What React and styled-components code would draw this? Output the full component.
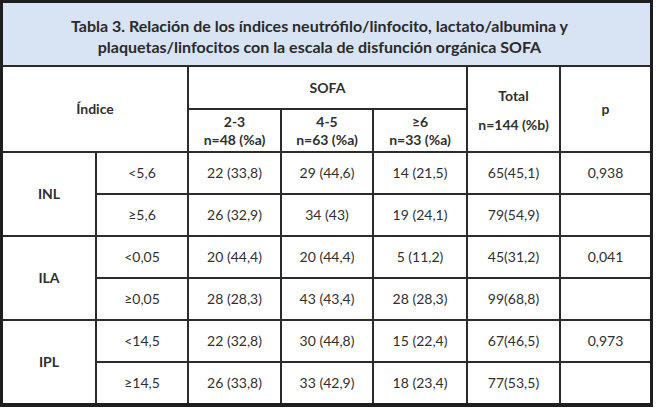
import styled, { createGlobalStyle } from 'styled-components';

const Global = createGlobalStyle`
  html, body {
    margin: 0;
    padding: 0;
    background: #ffffff;
  }
  body {
    font-family: Lato, "Open Sans", sans-serif;
    color: #2f2f2f;
  }
`;

const Frame = styled.div`
  width: 653px;
  box-sizing: border-box;
  border: 3px solid #1e1e1e;
  border-bottom-width: 4px;
  background: #2b2b2b;
`;

const Title = styled.div`
  height: 64px;
  box-sizing: border-box;
  padding: 3px 14px 0 0;
  background: #d8e4f4;
  border-bottom: 2px solid #2b2b2b;
  display: flex;
  flex-direction: column;
  align-items: center;
  justify-content: center;
  font-weight: 700;
  font-size: 16px;
  line-height: 21px;
  color: #2a2a2a;
  text-align: center;
`;

const Grid = styled.div`
  display: grid;
  grid-template-columns: 92px 90px 91px 90px 92px 91px 89px;
  grid-template-rows: 41px 41px repeat(6, 40px);
  gap: 2px;
`;

const Cell = styled.div`
  background: #ffffff;
  display: flex;
  flex-direction: column;
  align-items: center;
  justify-content: center;
  text-align: center;
  font-size: 14px;
  line-height: 18px;
  font-weight: ${(p) => (p.$bold ? 700 : 400)};
  grid-column: ${(p) => p.$col || 'auto'};
  grid-row: ${(p) => p.$row || 'auto'};
`;

const TotalCell = styled(Cell)`
  justify-content: space-around;
  padding: 14px 0 12px;
`;

const groups = [
  {
    name: 'INL',
    p: '0,938',
    rows: [
      ['<5,6', '22 (33,8)', '29 (44,6)', '14 (21,5)', '65(45,1)'],
      ['≥5,6', '26 (32,9)', '34 (43)', '19 (24,1)', '79(54,9)'],
    ],
  },
  {
    name: 'ILA',
    p: '0,041',
    rows: [
      ['<0,05', '20 (44,4)', '20 (44,4)', '5 (11,2)', '45(31,2)'],
      ['≥0,05', '28 (28,3)', '43 (43,4)', '28 (28,3)', '99(68,8)'],
    ],
  },
  {
    name: 'IPL',
    p: '0,973',
    rows: [
      ['<14,5', '22 (32,8)', '30 (44,8)', '15 (22,4)', '67(46,5)'],
      ['≥14,5', '26 (33,8)', '33 (42,9)', '18 (23,4)', '77(53,5)'],
    ],
  },
];

export default function App() {
  return (
    <>
      <Global />
      <Frame>
        <Title>
          <div>Tabla 3. Relación de los índices neutrófilo/linfocito, lactato/albumina y</div>
          <div>plaquetas/linfocitos con la escala de disfunción orgánica SOFA</div>
        </Title>
        <Grid>
          <Cell $bold $col="1 / 3" $row="1 / 3">Índice</Cell>
          <Cell $bold $col="3 / 6" $row="1">SOFA</Cell>
          <TotalCell $bold $col="6" $row="1 / 3">
            <span>Total</span>
            <span>n=144 (%b)</span>
          </TotalCell>
          <Cell $bold $col="7" $row="1 / 3">p</Cell>
          <Cell $bold $col="3" $row="2"><span>2-3</span><span>n=48 (%a)</span></Cell>
          <Cell $bold $col="4" $row="2"><span>4-5</span><span>n=63 (%a)</span></Cell>
          <Cell $bold $col="5" $row="2"><span>≥6</span><span>n=33 (%a)</span></Cell>
          {groups.map((g, gi) => {
            const r = 3 + gi * 2;
            return [
              <Cell key={g.name} $bold $col="1" $row={`${r} / ${r + 2}`}>{g.name}</Cell>,
              ...g.rows.map((row, ri) =>
                row.map((v, ci) => (
                  <Cell key={`${g.name}-${ri}-${ci}`} $col={`${ci + 2}`} $row={`${r + ri}`}>{v}</Cell>
                ))
              ),
              <Cell key={`${g.name}-p`} $col="7" $row={`${r}`}>{g.p}</Cell>,
              <Cell key={`${g.name}-pe`} $col="7" $row={`${r + 1}`} />,
            ];
          })}
        </Grid>
      </Frame>
    </>
  );
}
